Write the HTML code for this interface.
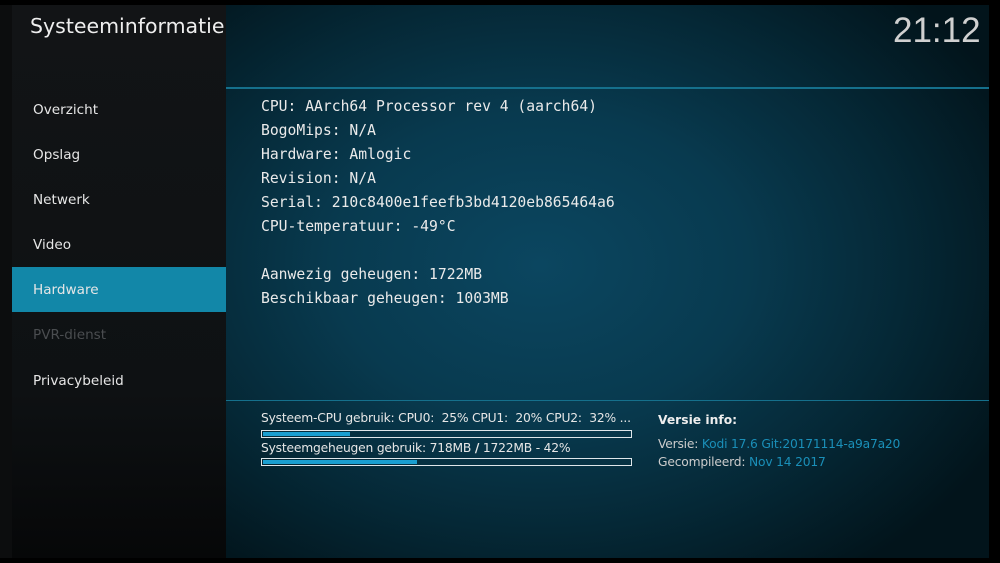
<!DOCTYPE html>
<html><head><meta charset="utf-8"><style>
*{margin:0;padding:0;box-sizing:border-box}
body{width:1000px;height:563px;background:#000;position:relative;overflow:hidden;font-family:"DejaVu Sans","Liberation Sans",sans-serif;}
#bg{position:absolute;left:0;top:5px;width:989px;height:553px;background:radial-gradient(ellipse 520px 380px at 540px 260px,#0b4660 0%,#083a4f 40%,#052836 70%,#02141b 100%);}
#side{position:absolute;left:12px;top:5px;width:214px;height:553px;background:linear-gradient(#121416,#0e1113 70%,#060708);}
#lstrip{position:absolute;left:0;top:5px;width:12px;height:553px;background:#0c0d0e}
.t{position:absolute;white-space:nowrap}
.mi{position:absolute;left:33px;font-size:13.6px;color:#e6e6e6}
#sel{position:absolute;left:12px;top:267px;width:214px;height:45px;background:#1287a8}
.line{position:absolute;left:226px;width:763px;height:2px;background:#15708c}
.mono{font-family:"DejaVu Sans Mono","Liberation Mono",monospace;font-size:14.7px;color:#eaeaea;left:261px}
.bar{position:absolute;left:261px;width:371px;height:8px;border:1px solid #dfe6ea}
.bar div{position:absolute;left:1px;top:1px;height:4px;background:#1a9ed0}
.s{font-size:12.3px;color:#e6e6e6;letter-spacing:-0.2px}
</style></head><body>
<div id="bg"></div>
<div id="lstrip"></div>
<div id="side"></div>
<div class="t" style="left:30px;top:14px;font-size:20.5px;color:#eee">Systeeminformatie</div>
<div class="t" style="left:893px;top:11px;font-size:35px;color:#d0d0d0;font-weight:300;font-family:'Liberation Sans',sans-serif">21:12</div>
<div class="line" style="top:87px"></div>
<div class="line" style="top:400px;height:1px"></div>
<div id="sel"></div>
<div class="t mi" style="top:102px">Overzicht</div>
<div class="t mi" style="top:147px">Opslag</div>
<div class="t mi" style="top:192px">Netwerk</div>
<div class="t mi" style="top:237px">Video</div>
<div class="t mi" style="top:282px">Hardware</div>
<div class="t mi" style="top:327px;color:#4a4d50">PVR-dienst</div>
<div class="t mi" style="top:373px">Privacybeleid</div>
<div class="t mono" style="top:98px">CPU: AArch64 Processor rev 4 (aarch64)</div>
<div class="t mono" style="top:122px">BogoMips: N/A</div>
<div class="t mono" style="top:146px">Hardware: Amlogic</div>
<div class="t mono" style="top:170px">Revision: N/A</div>
<div class="t mono" style="top:194px">Serial: 210c8400e1feefb3bd4120eb865464a6</div>
<div class="t mono" style="top:218px">CPU-temperatuur: -49°C</div>
<div class="t mono" style="top:266px">Aanwezig geheugen: 1722MB</div>
<div class="t mono" style="top:290px">Beschikbaar geheugen: 1003MB</div>
<div class="t s" style="left:261px;top:411px">Systeem-CPU gebruik: CPU0:&nbsp; 25% CPU1:&nbsp; 20% CPU2:&nbsp; 32% ...</div>
<div class="bar" style="top:430px"><div style="width:87px"></div></div>
<div class="t s" style="left:261px;top:441px">Systeemgeheugen gebruik: 718MB <b>/</b> 1722MB - 42%</div>
<div class="bar" style="top:458px"><div style="width:154px"></div></div>
<div class="t" style="left:658px;top:413px;font-size:12.3px;color:#eee;font-weight:bold">Versie info:</div>
<div class="t s" style="left:658px;top:437px;color:#ccc">Versie: <span style="color:#1a8fb8">Kodi 17.6 Git:20171114-a9a7a20</span></div>
<div class="t s" style="left:658px;top:455px;color:#ccc">Gecompileerd: <span style="color:#1a8fb8">Nov 14 2017</span></div>
</body></html>
